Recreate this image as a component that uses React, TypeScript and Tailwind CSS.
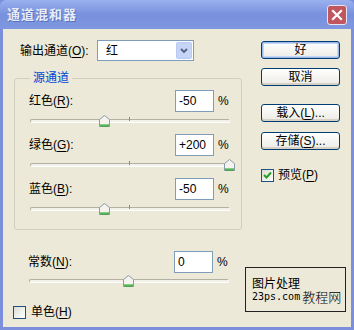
import React from "react";

const font = "font-['Liberation_Sans','Noto_Sans_CJK_SC',sans-serif]";

function U({ c }: { c: string }) {
  return <span className="underline underline-offset-[2px]">{c}</span>;
}

function Thumb() {
  return (
    <svg width="11" height="12" viewBox="0 0 11 12" className="block">
      <path d="M0.5 4.5 L5.5 0.5 L10.5 4.5 L10.5 11.5 L0.5 11.5 Z" fill="#f4f3ee" stroke="#8a9aa8" />
      <path d="M1 10 L10 10 M1 11 L10 11" stroke="#21a121" />
    </svg>
  );
}

function Slider({ pos }: { pos: number }) {
  return (
    <div className="relative ml-[15px] h-[14px] w-[200px]">
      <div className="absolute left-0 right-0 top-[5px] h-[4px] rounded-[2px] border border-[#b4b1a3] border-b-white border-r-white bg-[#f3f2ea]" />
      <div className="absolute left-[99px] top-[3px] h-[4px] w-px bg-[#8d8b80]" />
      <div className="absolute top-[1px]" style={{ left: pos - 5 }}>
        <Thumb />
      </div>
    </div>
  );
}

function ValueRow({ label, k, value }: { label: string; k: string; value: string }) {
  return (
    <div className="flex h-[22px] items-center">
      <span className="w-[160px] pl-[14px]">
        {label}(<U c={k} />):
      </span>
      <div className="flex h-[22px] w-[39px] items-center border border-[#7f9db9] bg-white pl-[3px]">{value}</div>
      <span className="ml-[4px]">%</span>
    </div>
  );
}

function XpButton({ children, def }: { children: React.ReactNode; def?: boolean }) {
  return (
    <div
      className={`ml-[16px] flex h-[18px] w-[79px] items-center justify-center rounded-[3px] border border-[#003c74] bg-gradient-to-b from-white to-[#ecebe6] ${
        def ? "shadow-[inset_0_0_0_1px_#98b8ea,inset_0_0_0_2px_#c6d6f6]" : "shadow-[inset_0_-2px_0_#d6d0c5]"
      }`}
    >
      {children}
    </div>
  );
}

export default function App() {
  return (
    <div className={`${font} h-[330px] w-[354px] overflow-hidden bg-[#7b8fdc] text-[12px] leading-[16px] text-black`}>
      {/* title bar */}
      <div className="flex h-[29px] items-center justify-between rounded-t-[6px] bg-gradient-to-b from-[#9bb0ee] via-[#7891de] to-[#7f97e0] pl-[7px] pr-[7px]">
        <span className="text-[13px] font-bold tracking-[1px] text-[#e6ecf8] [text-shadow:1px_1px_0_#5a6fb8]">通道混和器</span>
        <div className="flex h-[20px] w-[20px] items-center justify-center rounded-[3px] border border-[#e8e4f0] bg-[#c0575e]">
          <svg width="12" height="12" viewBox="0 0 12 12">
            <path d="M2 2 L10 10 M10 2 L2 10" stroke="white" strokeWidth="2.2" strokeLinecap="square" />
          </svg>
        </div>
      </div>

      {/* body */}
      <div className="mx-[3px] flex h-[298px] bg-[#ece9d8]">
        {/* left column */}
        <div className="w-[242px] pt-[11px]">
          <div className="flex h-[21px] items-center pl-[17px]">
            <span className="w-[77px]">
              输出通道(<U c="O" />):
            </span>
            <div className="flex h-[21px] w-[97px] items-center border border-[#7f9db9] bg-white">
              <span className="flex-1 pl-[8px]">红</span>
              <div className="mr-px flex h-[17px] w-[16px] items-center justify-center rounded-[2px] border border-[#b9cbf3] bg-[#c6d4f7]">
                <svg width="8" height="6" viewBox="0 0 8 6">
                  <path d="M1 1 L4 4 L7 1" stroke="#4d6185" strokeWidth="1.8" fill="none" />
                </svg>
              </div>
            </div>
          </div>

          <fieldset className="ml-[11px] mt-[9px] w-[228px] rounded-[3px] border border-[#d0d0bf] pb-[13px] pt-[4px]">
            <legend className="ml-[15px] px-[3px] text-[#0046d5]">源通道</legend>
            <ValueRow label="红色" k="R" value="-50" />
            <div className="mt-[2px]">
              <Slider pos={74} />
            </div>
            <div className="mt-[6px]">
              <ValueRow label="绿色" k="G" value="+200" />
            </div>
            <div className="mt-[2px]">
              <Slider pos={199} />
            </div>
            <div className="mt-[6px]">
              <ValueRow label="蓝色" k="B" value="-50" />
            </div>
            <div className="mt-[2px]">
              <Slider pos={74} />
            </div>
          </fieldset>

          <div className="ml-[11px] mt-[21px] w-[228px]">
            <ValueRow label="常数" k="N" value="0" />
            <div className="mt-[1px]">
              <Slider pos={99} />
            </div>
          </div>

          <div className="ml-[10px] mt-[16px] flex items-center">
            <div className="h-[13px] w-[13px] border border-[#1c5180] bg-gradient-to-br from-[#dcdcd6] to-white" />
            <span className="ml-[5px]">
              单色(<U c="H" />)
            </span>
          </div>
        </div>

        {/* right column */}
        <div className="flex flex-1 flex-col pt-[12px]">
          <XpButton def>好</XpButton>
          <div className="mt-[9px]">
            <XpButton>取消</XpButton>
          </div>
          <div className="mt-[18px]">
            <XpButton>
              载入(<U c="L" />)...
            </XpButton>
          </div>
          <div className="mt-[10px]">
            <XpButton>
              存储(<U c="S" />)...
            </XpButton>
          </div>
          <div className="ml-[16px] mt-[17px] flex items-center">
            <div className="flex h-[13px] w-[13px] items-center justify-center border border-[#1c5180] bg-gradient-to-br from-[#dcdcd6] to-white">
              <svg width="9" height="9" viewBox="0 0 9 9">
                <path d="M1 4 L3.5 6.5 L8 1.5" stroke="#21a121" strokeWidth="2" fill="none" />
              </svg>
            </div>
            <span className="ml-[4px]">
              预览(<U c="P" />)
            </span>
          </div>

          <div className="mt-[84px] flex h-[45px] w-[101px] flex-col justify-center border border-[#222] pl-[6px] font-['Noto_Sans_CJK_SC',monospace] leading-[14px]">
            <span className="text-[12px]">图片处理</span>
            <span className="flex items-end">
              <span className="font-['DejaVu_Sans_Mono',monospace] text-[10px]">23ps.com</span>
              <span className="ml-[2px] text-[13px] font-light">教程网</span>
            </span>
          </div>
        </div>
      </div>
    </div>
  );
}
